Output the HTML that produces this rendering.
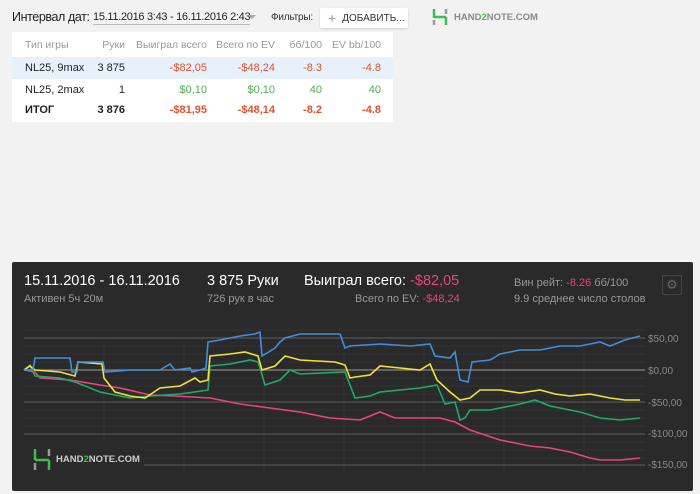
<!DOCTYPE html>
<html><head><meta charset="utf-8"><style>
*{margin:0;padding:0;box-sizing:border-box}
body{width:700px;height:494px;background:#f2f2f2;font-family:"Liberation Sans",sans-serif;position:relative;overflow:hidden;color:#222}
.a{position:absolute;white-space:nowrap}
.tb{position:absolute;left:12px;top:32px;width:381px;height:90px;background:#fff}
.r{color:#e0522c}.g{color:#4caf50}
.row{position:absolute;left:0;width:381px;height:22px;font-size:11px}
.row span{position:absolute;top:5px}
.hd span{color:#999;font-size:10.5px}
.panel{position:absolute;left:12px;top:262px;width:681px;height:229px;background:#2a2a2a;border-radius:2px}
</style></head><body>
<div class="a" style="left:12px;top:10px;font-size:12.5px;letter-spacing:-0.4px;color:#222">Интервал дат:</div>
<div class="a" style="left:93px;top:11px;font-size:11px;letter-spacing:-0.3px;color:#222;border-bottom:1px solid #bbb;padding-bottom:1px">15.11.2016 3:43 - 16.11.2016 2:43</div>
<div class="a" style="left:248px;top:15px;width:0;height:0;border-left:4px solid transparent;border-right:4px solid transparent;border-top:4px solid #aaa"></div>
<div class="a" style="left:271px;top:12px;font-size:10px;letter-spacing:-0.2px;color:#333">Фильтры:</div>
<div class="a" style="left:320px;top:8px;width:88px;height:20px;background:#fff;border-radius:2px;box-shadow:0 1px 2px rgba(0,0,0,.15);font-size:10px;color:#333;display:flex;align-items:center;padding-left:8px"><span style="color:#999;font-size:14px;margin-right:6px;line-height:10px">+</span>ДОБАВИТЬ...</div>
<svg class="a" style="left:432px;top:8px" width="16" height="18"><path d="M2 12v5M14 1v5" stroke="#999" stroke-width="2.5" fill="none"/><path d="M2 1v9M2 9h12M14 9v8" stroke="#3bbf4a" stroke-width="2.5" fill="none"/></svg>
<div class="a" style="left:454px;top:12px;font-size:9.5px;font-weight:bold;color:#888">HAND<span style="color:#3bbf4a">2</span>NOTE.COM</div>

<div class="tb">
<div class="row hd" style="top:2px"><span style="left:13px">Тип игры</span><span style="right:268px">Руки</span><span style="right:186px">Выиграл всего</span><span style="right:118px">Всего по EV</span><span style="right:71px">бб/100</span><span style="right:12px">EV bb/100</span></div>
<div class="row" style="top:25px;background:#e6f1fc"><span style="left:13px">NL25, 9max</span><span style="right:268px">3 875</span><span class="r" style="right:186px">-$82,05</span><span class="r" style="right:118px">-$48,24</span><span class="r" style="right:71px">-8.3</span><span class="r" style="right:12px">-4.8</span></div>
<div class="row" style="top:47px"><span style="left:13px">NL25, 2max</span><span style="right:268px">1</span><span class="g" style="right:186px">$0,10</span><span class="g" style="right:118px">$0,10</span><span class="g" style="right:71px">40</span><span class="g" style="right:12px">40</span></div>
<div class="row" style="top:67px;font-weight:bold"><span style="left:13px">ИТОГ</span><span style="right:268px">3 876</span><span class="r" style="right:186px">-$81,95</span><span class="r" style="right:118px">-$48,14</span><span class="r" style="right:71px">-8.2</span><span class="r" style="right:12px">-4.8</span></div>
</div>

<div class="panel"></div>
<div class="a" style="left:24px;top:273px;font-size:14.5px;color:#fff">15.11.2016 - 16.11.2016</div>
<div class="a" style="left:24px;top:293px;font-size:11px;color:#999">Активен 5ч 20м</div>
<div class="a" style="left:207px;top:273px;font-size:14.5px;color:#fff">3 875 Руки</div>
<div class="a" style="left:207px;top:293px;font-size:11px;color:#999">726 рук в час</div>
<div class="a" style="left:304px;top:273px;font-size:14.5px;color:#fff">Выиграл всего: <span style="color:#e8457a">-$82,05</span></div>
<div class="a" style="left:355px;top:293px;font-size:11px;color:#999">Всего по EV: <span style="color:#e8457a">-$48,24</span></div>
<div class="a" style="left:514px;top:277px;font-size:11px;color:#999">Вин рейт: <span style="color:#e8457a">-8.26</span> бб/100</div>
<div class="a" style="left:514px;top:293px;font-size:11px;color:#999">9.9 среднее число столов</div>
<div class="a" style="left:662px;top:275px;width:20px;height:20px;border:1px solid #444;border-radius:2px;color:#666;font-size:13px;text-align:center;line-height:18px">⚙</div>

<svg class="a" style="left:0;top:0" width="700" height="494">
<g stroke="#323232" stroke-width="1">
<path d="M24 330H645M24 346H645M24 354H645M24 362H645M24 378H645M24 386H645M24 394H645M24 410H645M24 418H645M24 426H645M24 442H645M24 450H645M24 458H645"/>
<path d="M104 342V472M184 342V472M264 342V472M344 342V472M424 342V472M504 342V472M584 342V472"/>
</g>
<g stroke="#555" stroke-width="1.2"><path d="M24 338H645M24 402H645M24 434H645M24 465H645"/></g>
<path d="M24 370H645" stroke="#888" stroke-width="1.2"/>
<g fill="none" stroke-width="1.6">
<polyline stroke="#e8457a" points="24,370 35,372 40,378 70,380 100,385 120,388 150,395 175,396 210,398 240,404 270,408 300,412 330,418 360,420 370,416 380,412 395,418 410,418 440,418 455,422 470,430 500,440 520,444 530,446 550,448 570,452 590,458 600,460 620,460 640,458"/>
<polyline stroke="#1dab6a" points="24,370 30,365 35,376 60,378 75,382 100,392 115,395 130,398 150,396 180,394 208,390 210,366 230,364 250,360 258,362 260,368 265,385 280,380 290,370 300,374 345,372 350,385 355,398 370,396 380,392 400,390 420,388 437,385 445,404 455,402 460,420 465,418 470,410 490,410 520,404 535,400 550,406 560,408 580,412 600,418 620,420 640,418"/>
<polyline stroke="#f0e23c" points="24,370 30,366 35,370 60,372 75,376 78,362 102,364 104,378 115,392 130,396 145,398 160,388 180,386 195,378 200,382 208,380 210,356 230,354 245,352 258,356 262,370 275,366 285,356 300,360 335,362 345,365 350,378 355,377 370,375 380,366 400,368 420,370 430,364 437,380 450,392 460,400 470,398 480,390 500,390 520,393 540,390 555,394 570,396 590,394 610,398 625,400 640,400"/>
<polyline stroke="#3f8fe0" points="24,370 33,370 35,358 70,358 72,372 77,372 78,362 103,362 105,372 130,370 160,370 170,364 175,370 190,368 192,372 200,370 206,368 208,342 220,340 240,336 255,334 260,332 262,356 275,348 280,342 285,338 300,334 340,334 345,348 350,346 380,344 410,346 430,344 435,356 450,358 455,352 460,380 468,382 472,362 490,360 500,354 520,350 540,350 560,346 580,346 590,344 600,342 610,346 625,340 640,336"/>
</g>
<rect x="24" y="440" width="120" height="38" fill="#2a2a2a"/>
<path d="M35 449v11M35 460h14M49 460v10" stroke="#3bbf4a" stroke-width="2.5" fill="none"/>
<path d="M35 463v7M49 449v7" stroke="#999" stroke-width="2.5"/>
<text x="56" y="462" font-family="Liberation Sans" font-size="9.5" font-weight="bold" fill="#ccc">HAND<tspan fill="#3bbf4a">2</tspan>NOTE.COM</text>
<g font-family="Liberation Sans" font-size="10" fill="#888">
<text x="648" y="342">$50,00</text><text x="648" y="374">$0,00</text><text x="648" y="406">-$50,00</text><text x="648" y="437">-$100,00</text><text x="648" y="468">-$150,00</text>
</g>
</svg>
</body></html>
